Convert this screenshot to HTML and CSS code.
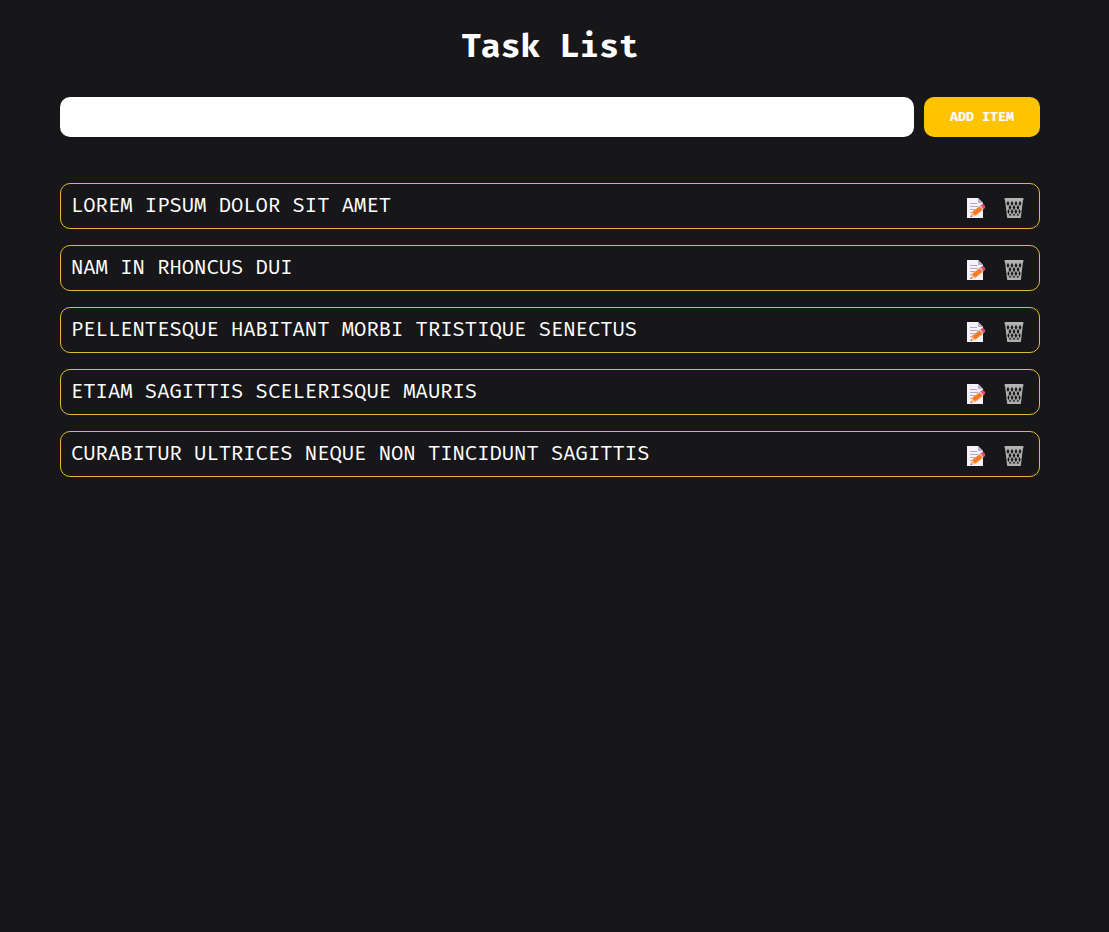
FILE: index.html
```html
<!DOCTYPE html>
<html lang="en">
<head>
<meta charset="utf-8">
<meta name="viewport" content="width=device-width, initial-scale=1">
<title>Task List</title>
<link rel="stylesheet" href="styles.css">
</head>
<body>
<svg class="sprite" aria-hidden="true">
  <symbol id="edit" viewBox="0 0 20 22">
    <path d="M1 1h11l5 5v15H1z" fill="#f6f1fa"/>
    <path d="M12 1v5h5z" fill="#b9afcb"/>
    <path d="M4 6.500h7M4 9.500h8M4 12.500h5M4 15.500h2" stroke="#b3abc6" stroke-width="1"/>
    <path d="M4.500 20l1.300-5 3.600 3.800z" fill="#ffc08a"/>
    <path d="M5.800 15l8-6 3.200 3.800-7.600 6z" fill="#ff822a"/>
    <path d="M7.500 17l8-6.300" stroke="#f06a1a" stroke-width="1"/>
    <path d="M13.300 9.300l1.500-1.200 3.200 3.800-1.500 1.200z" fill="#c9c0d4"/>
    <path d="M14.500 8.300l1.200-.9q1.300-.8 2.300.4l1 1.200q.8 1.200-.2 2.200l-1.200.9z" fill="#f04862"/>
    <path d="M4.500 20l.5-1.700 1.200 1.300z" fill="#5b4150"/>
  </symbol>
  <symbol id="bin" viewBox="0 0 20 22">
    <path d="M1 3h18l-2.200 18H3.200z" fill="#aeaeae"/>
    <g fill="#171719">
      <path d="M4 3.800l1.400 2.600L4 9 2.600 6.400zM8 3.800l1.400 2.600L8 9 6.600 6.400zM12 3.800l1.400 2.600L12 9l-1.400-2.600zM16 3.800l1.400 2.600L16 9l-1.400-2.600z"/>
      <path d="M6 7.800l1.400 2.700L6 13.200l-1.400-2.700zM10 7.800l1.400 2.700-1.400 2.700-1.400-2.700zM14 7.800l1.400 2.700-1.400 2.700-1.400-2.700z"/>
      <path d="M4.300 12l1.300 2.600-1.200 2.600-1-2.600zM8.100 12l1.400 2.600-1.400 2.600-1.400-2.600zM11.900 12l1.400 2.600-1.400 2.600-1.400-2.600zM15.700 12l.9 2.600-1 2.600-1.200-2.600z"/>
      <path d="M6.200 16.200l1.300 2.400H4.900zM10 16.200l1.300 2.400H8.700zM13.800 16.200l1.300 2.400h-2.600z"/>
    </g>
    <rect x=".5" y="1" width="19" height="2.600" rx="1" fill="#b4b4b4"/>
  </symbol>
</svg>
<main class="page">
  <h1 class="title">Task List</h1>
  <form class="entry">
    <input class="entry-text" type="text" aria-label="New task">
    <button class="entry-add" type="button">ADD ITEM</button>
  </form>
  <ul class="tasks">
    <li class="task"><span class="task-name">LOREM IPSUM DOLOR SIT AMET</span><button class="action" type="button" aria-label="Edit"><svg class="icon"><use href="#edit"/></svg></button><button class="action" type="button" aria-label="Delete"><svg class="icon"><use href="#bin"/></svg></button></li>
    <li class="task"><span class="task-name">NAM IN RHONCUS DUI</span><button class="action" type="button" aria-label="Edit"><svg class="icon"><use href="#edit"/></svg></button><button class="action" type="button" aria-label="Delete"><svg class="icon"><use href="#bin"/></svg></button></li>
    <li class="task"><span class="task-name">PELLENTESQUE HABITANT MORBI TRISTIQUE SENECTUS</span><button class="action" type="button" aria-label="Edit"><svg class="icon"><use href="#edit"/></svg></button><button class="action" type="button" aria-label="Delete"><svg class="icon"><use href="#bin"/></svg></button></li>
    <li class="task"><span class="task-name">ETIAM SAGITTIS SCELERISQUE MAURIS</span><button class="action" type="button" aria-label="Edit"><svg class="icon"><use href="#edit"/></svg></button><button class="action" type="button" aria-label="Delete"><svg class="icon"><use href="#bin"/></svg></button></li>
    <li class="task"><span class="task-name">CURABITUR ULTRICES NEQUE NON TINCIDUNT SAGITTIS</span><button class="action" type="button" aria-label="Edit"><svg class="icon"><use href="#edit"/></svg></button><button class="action" type="button" aria-label="Delete"><svg class="icon"><use href="#bin"/></svg></button></li>
  </ul>
</main>
</body>
</html>
```
FILE: styles.css
```css
* { box-sizing: border-box; }

body {
  margin: 0;
  background: #171719;
  color: #fff;
  font-family: "Fira Code", "Fira Mono", "DejaVu Sans Mono", monospace;
}

.sprite { display: none; }

.page { padding: 26px 69px 24px 60px; }

.title {
  margin: 0 0 29px;
  font-size: 32px;
  line-height: 42px;
  text-align: center;
}

.entry {
  display: flex;
  gap: 10px;
  margin-bottom: 46px;
}

.entry-text {
  flex: 1;
  min-width: 0;
  height: 40px;
  padding: 0 10px;
  border: 0;
  border-radius: 10px;
  background: #fff;
  font: inherit;
}

.entry-add {
  width: 116px;
  height: 40px;
  padding: 0;
  border: 0;
  border-radius: 10px;
  background: #ffc400;
  color: #fff;
  font: bold 13px "Fira Code", "Fira Mono", "DejaVu Sans Mono", monospace;
}

.tasks {
  display: flex;
  flex-direction: column;
  gap: 16px;
  margin: 0;
  padding: 0;
  list-style: none;
}

.task {
  display: flex;
  align-items: center;
  gap: 18px;
  padding: 8px 15px 8px 10px;
  border: 1px solid #e3b935;
  border-radius: 10px;
}

.task-name {
  flex: 1;
  font-size: 20px;
  line-height: 28px;
}

.action {
  display: flex;
  padding: 4px 0 0;
  border: 0;
  background: none;
}

.icon {
  width: 20px;
  height: 22px;
}
```
